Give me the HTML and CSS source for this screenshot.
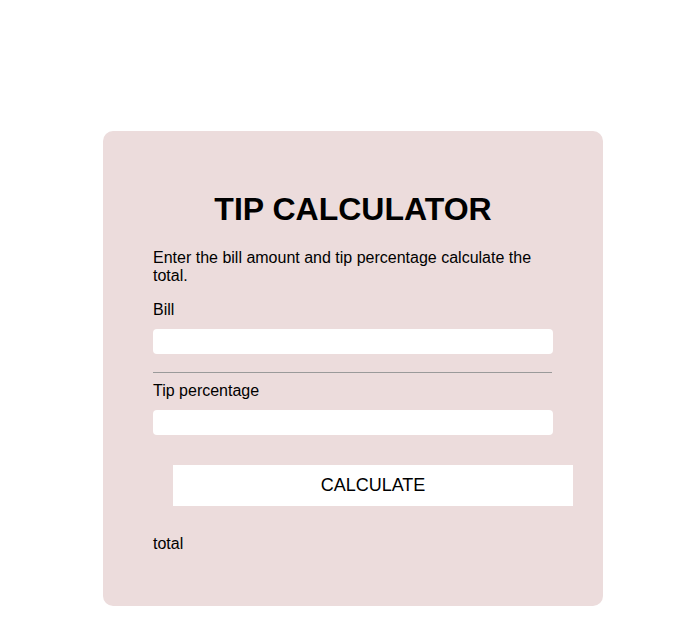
FILE: index.html
```html
<!DOCTYPE html>
<html>
<head>
<meta charset="utf-8">
<link rel="stylesheet" href="styles.css">
</head>
<body>
<div class="card">
  <h1 class="title">TIP CALCULATOR</h1>
  <p class="intro">Enter the bill amount and tip percentage calculate the total.</p>
  <label class="label" for="bill">Bill</label>
  <input class="field" id="bill" type="text">
  <hr class="divider">
  <label class="label label-tip" for="tip">Tip percentage</label>
  <input class="field" id="tip" type="text">
  <button class="calc">CALCULATE</button>
  <p class="total">total</p>
</div>
</body>
</html>
```
FILE: styles.css
```css
html, body {
  margin: 0;
  padding: 0;
  background: #ffffff;
}
body {
  font-family: "Liberation Sans", Arial, sans-serif;
  color: #000;
}
.card {
  box-sizing: border-box;
  width: 500px;
  margin: 131px 0 0 103px;
  padding: 60px 50px 53px 50px;
  background: #ecdcdc;
  border-radius: 10px;
}
.title {
  margin: 0 0 21px;
  font-size: 32px;
  font-weight: bold;
  text-align: center;
  line-height: 37px;
}
.intro {
  margin: 0 0 16px;
  font-size: 16px;
  line-height: 18px;
}
.label {
  display: block;
  font-size: 16px;
  line-height: 18px;
}
.label-tip {
  margin-top: 9px;
}
.field {
  display: block;
  box-sizing: border-box;
  width: 400px;
  height: 25px;
  margin-top: 10px;
  border: none;
  border-radius: 4px;
  background: #fff;
  outline: none;
}
.divider {
  margin: 18px 0 0;
  width: 399px;
  border: 0;
  border-top: 1px solid #9a9a9a;
  height: 0;
}
.calc {
  display: block;
  width: 400px;
  height: 41px;
  margin: 30px 0 0 20px;
  border: none;
  background: #fff;
  font-family: "Liberation Sans", Arial, sans-serif;
  font-size: 18px;
  color: #000;
  padding: 0;
}
.total {
  margin: 29px 0 0;
  font-size: 16px;
  line-height: 18px;
}
```
